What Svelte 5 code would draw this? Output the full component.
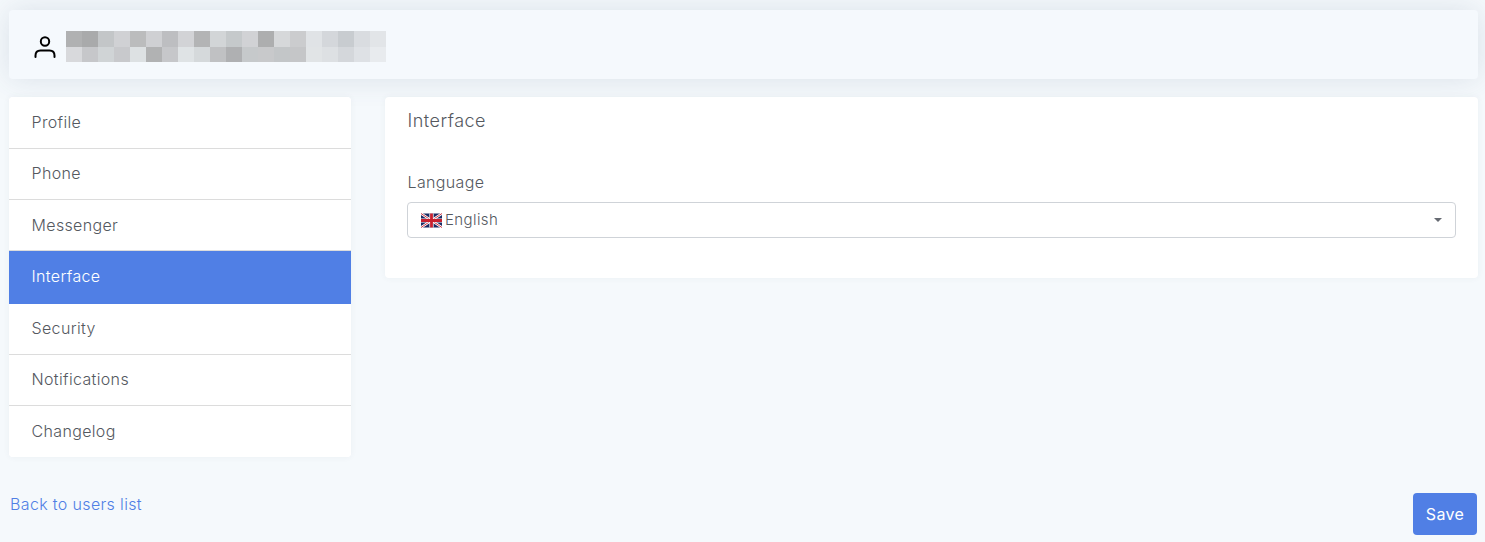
<script>
	const pixels = [
		'b0b1b2', 'a9aaab', 'c3c6c8', 'd0d1d4', 'bbbcbd', 'cfd0d3', 'bdbec1', 'd2d3d6', 'b3b4b5', 'd2d5d7',
		'c5c9cb', 'd1d2d5', 'adaeaf', 'd6d8da', 'cbccce', 'e0e3e6', 'd4d7db', 'c8ccd0', 'd9dce0', 'e2e5e8',
		'd8d9dc', 'c6c7ca', 'd0d4d6', 'c8c9cc', 'dde1e3', 'b1b2b3', 'c6c7ca', 'dfe3e5', 'd5d9db', 'c0c1c3',
		'afb0b2', 'c6c9cb', 'c8c9cb', 'c3c6c8', 'c5c6c8', 'e1e4e6', 'dde0e3', 'd4d7db', 'dee1e5', 'e8ebee'
	];
	const tabs = ['Profile', 'Phone', 'Messenger', 'Interface', 'Security', 'Notifications', 'Changelog'];
	let active = 'Interface';
</script>

<div class="page">
	<header class="user-bar">
		<svg class="user-icon" viewBox="0 0 24 24" width="24" height="24" fill="none" stroke="#000" stroke-width="2" stroke-linecap="round">
			<circle cx="12" cy="7.5" r="4.2" />
			<path d="M2.5 23v-1.5c0-3 2-5 5-5h9c3 0 5 2 5 5V23" />
		</svg>
		<div class="blur-name">
			{#each pixels as color}
				<span style="background:#{color}"></span>
			{/each}
		</div>
	</header>

	<div class="columns">
		<nav class="tabs">
			{#each tabs as tab}
				<button class="tab" class:active={tab === active} onclick={() => (active = tab)}>{tab}</button>
			{/each}
		</nav>

		<section class="panel">
			<h2>{active}</h2>
			<label for="lang">Language</label>
			<div class="select" id="lang">
				<svg class="flag" viewBox="0 0 60 40" width="21" height="15">
					<rect width="60" height="40" fill="#1b2a63" />
					<path d="M0 0L60 40M60 0L0 40" stroke="#fff" stroke-width="7" />
					<path d="M0 0L60 40M60 0L0 40" stroke="#c8202f" stroke-width="2.5" />
					<path d="M30 0V40M0 20H60" stroke="#fff" stroke-width="12" />
					<path d="M30 0V40M0 20H60" stroke="#c8202f" stroke-width="8" />
				</svg>
				<span class="value">English</span>
				<span class="caret"></span>
			</div>
		</section>
	</div>

	<footer class="bottom">
		<a href="#back">Back to users list</a>
		<button class="save">Save</button>
	</footer>
</div>

<style>
	:global(body) {
		background: #f5f9fc;
	}

	.page {
		height: 542px;
		box-sizing: border-box;
		padding: 10px 7px 7px 9px;
		display: flex;
		flex-direction: column;
		font-family: Inter, "Liberation Sans", sans-serif;
		font-size: 16px;
		font-weight: 300;
		letter-spacing: 0.35px;
		color: #55595f;
		overflow: hidden;
	}

	.user-bar {
		height: 69px;
		flex: none;
		display: flex;
		align-items: center;
		padding-left: 24px;
		gap: 9px;
		background: #f5f9fd;
		border-radius: 4px;
		box-shadow: 0 0 30px rgba(60, 80, 110, 0.14);
	}

	.user-icon {
		margin-top: 2px;
	}

	.blur-name {
		display: grid;
		grid-template-columns: repeat(20, 16px);
		grid-template-rows: 16px 15px;
		margin-top: 4px;
	}

	.columns {
		display: flex;
		align-items: flex-start;
		gap: 34px;
		margin-top: 18px;
		flex: 1;
	}

	.tabs {
		width: 342px;
		flex: none;
		display: flex;
		flex-direction: column;
		background: #fff;
		border-radius: 4px;
		overflow: hidden;
		box-shadow: 0 0 6px rgba(60, 80, 110, 0.06);
	}

	.tab {
		height: 51px;
		padding: 0 0 3px 22.5px;
		border: 0;
		border-bottom: 1px solid #dcdcdc;
		background: #fff;
		font: inherit;
		letter-spacing: inherit;
		color: inherit;
		text-align: left;
		flex: none;
	}

	.tab:first-child {
		height: 52px;
		padding-bottom: 1px;
	}

	.tab:nth-child(3) {
		padding-bottom: 1px;
	}

	.tab:last-child {
		border-bottom: 0;
		padding-bottom: 1px;
	}

	.tab.active {
		height: 53px;
		padding-bottom: 3px;
		background: #507fe5;
		color: #fff;
		border-bottom: 0;
	}

	.panel {
		flex: 1;
		height: 181px;
		box-sizing: border-box;
		padding: 0 22px;
		background: #fff;
		border-radius: 4px;
		box-shadow: 0 0 6px rgba(60, 80, 110, 0.06);
	}

	h2 {
		margin: 13px 0 0;
		font-size: 18px;
		font-weight: 300;
		letter-spacing: 0.5px;
		line-height: 22px;
		padding-left: 0.5px;
	}

	label {
		display: block;
		margin-top: 40px;
		padding-left: 0.5px;
		line-height: 20px;
	}

	.select {
		display: flex;
		align-items: center;
		height: 36px;
		box-sizing: border-box;
		margin-top: 10px;
		padding: 0 12px 0 13px;
		gap: 3px;
		border: 1px solid #cfd3d8;
		border-radius: 4px;
		font-size: 15px;
		letter-spacing: 0.4px;
	}

	.value {
		flex: 1;
		margin-bottom: 2px;
	}

	.caret {
		width: 0;
		height: 0;
		border: 4px solid transparent;
		border-top: 4px solid #666a72;
		border-bottom: 0;
		margin-right: 1px;
	}

	.bottom {
		display: flex;
		align-items: flex-start;
		justify-content: space-between;
		padding-left: 1px;
	}

	a {
		color: #507fe5;
		text-decoration: none;
		margin-top: 1px;
	}

	.save {
		width: 64px;
		height: 42px;
		margin-right: 1px;
		padding-bottom: 2px;
		border: 0;
		border-radius: 4px;
		background: #507fe5;
		color: #fff;
		font: inherit;
		letter-spacing: inherit;
		font-weight: 400;
	}
</style>
